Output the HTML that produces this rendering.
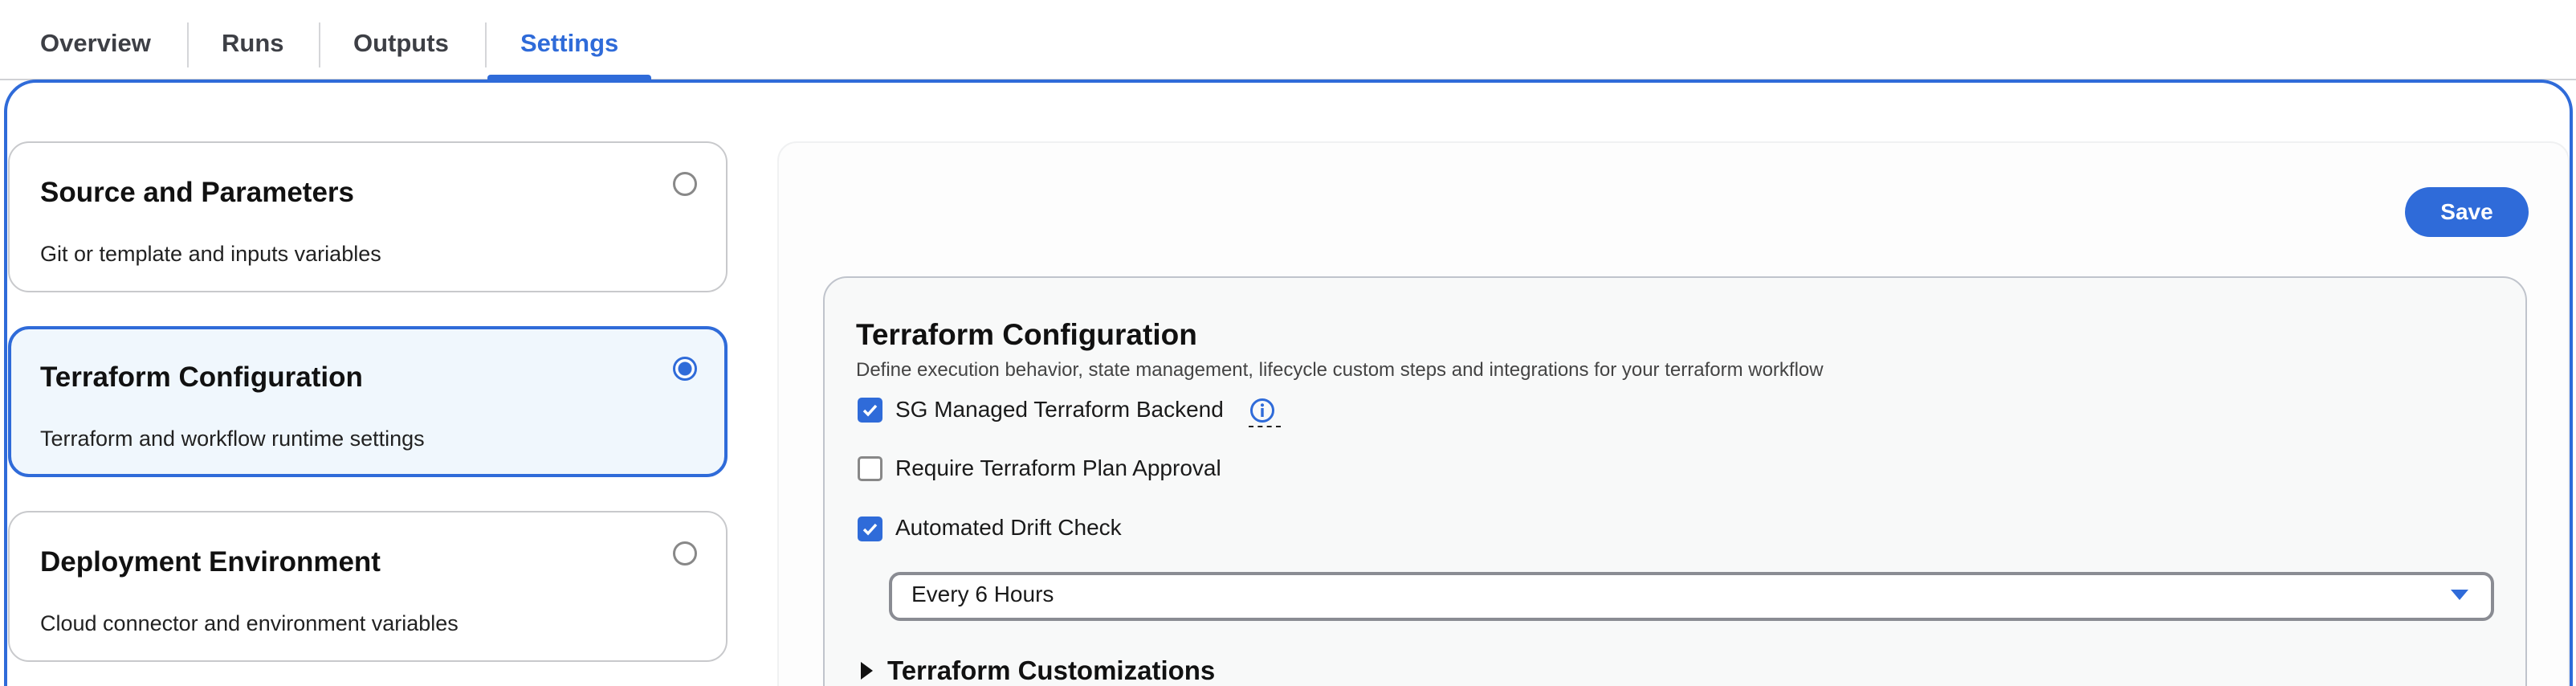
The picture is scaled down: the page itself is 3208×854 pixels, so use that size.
<!DOCTYPE html>
<html><head><meta charset="utf-8"><style>
*{box-sizing:border-box;margin:0;padding:0}
html,body{width:3208px;height:854px;overflow:hidden}
body{background:#fff;font-family:"Liberation Sans",sans-serif;color:#111}
#w{position:relative;width:3208px;height:854px;overflow:hidden}
.a{position:absolute}
.tab{position:absolute;top:36px;font-size:31px;font-weight:bold;color:#3d3f45}
.div{position:absolute;top:28px;width:2px;height:56px;background:#d5d6d9}
.card{position:absolute;left:10px;width:896px;height:188px;border:2px solid #c8c9cc;border-radius:26px;background:#fff}
.card .t{position:absolute;left:38px;top:42px;font-size:35px;font-weight:bold;color:#111}
.card .s{position:absolute;left:38px;top:123px;font-size:27px;color:#222}
.card .r{position:absolute;left:826px;top:36px;width:30px;height:30px;border:3px solid #888;border-radius:50%}
.cb{position:absolute;left:1068px;width:31px;height:31px;border-radius:5px;background:#2f6bd9}
.cb svg{position:absolute;left:5px;top:5px}
.lbl{position:absolute;left:1115px;font-size:28px;color:#1a1a1a}
</style></head><body><div id="w">
<div class="tab" style="left:50px">Overview</div>
<div class="div" style="left:233px"></div>
<div class="tab" style="left:276px">Runs</div>
<div class="div" style="left:397px"></div>
<div class="tab" style="left:440px">Outputs</div>
<div class="div" style="left:604px"></div>
<div class="tab" style="left:648px;color:#2f6bd9">Settings</div>
<div class="a" style="left:0;top:98px;width:3208px;height:2px;background:#d0d1d4"></div>
<div class="a" style="left:607px;top:93px;width:204px;height:8px;background:#2f6bd9;border-radius:4px 4px 0 0"></div>

<div class="card" style="top:176px"><div class="t">Source and Parameters</div><div class="s">Git or template and inputs variables</div><div class="r"></div></div>
<div class="card" style="top:406px;border:4px solid #2f6bd9;background:#f0f7fd"><div class="t" style="left:36px;top:40px">Terraform Configuration</div><div class="s" style="left:36px;top:121px">Terraform and workflow runtime settings</div><div class="r" style="left:824px;top:34px;border-color:#2f6bd9;border-width:3px;background:radial-gradient(circle,#2f6bd9 0 8px,#fff 9px)"></div></div>
<div class="card" style="top:636px"><div class="t">Deployment Environment</div><div class="s">Cloud connector and environment variables</div><div class="r"></div></div>

<div class="a" style="left:968px;top:176px;width:2232px;height:900px;border:2px solid #f0f1f2;border-radius:24px;background:#fdfdfd"></div>
<div class="a" style="left:5px;top:99px;width:3199px;height:900px;border:4px solid #2f6bd9;border-radius:40px"></div>
<div class="a" style="left:2995px;top:233px;width:154px;height:62px;border-radius:31px;background:#2f6bd9;color:#fff;font-weight:bold;font-size:28px;text-align:center;line-height:62px">Save</div>

<div class="a" style="left:1025px;top:344px;width:2122px;height:700px;border:2px solid #c0c4cc;border-radius:30px;background:#f8f9f9"></div>
<div class="a" style="left:1066px;top:396px;font-size:37px;font-weight:bold">Terraform Configuration</div>
<div class="a" style="left:1066px;top:447px;font-size:24px;color:#444">Define execution behavior, state management, lifecycle custom steps and integrations for your terraform workflow</div>

<div class="cb" style="top:495px"><svg width="21" height="21" viewBox="0 0 21 21"><path d="M3 11l5 5 10-11" stroke="#fff" stroke-width="3.5" fill="none"/></svg></div>
<div class="lbl" style="top:494px">SG Managed Terraform Backend</div>
<svg class="a" style="left:1556px;top:495px" width="32" height="32" viewBox="0 0 32 32"><circle cx="16" cy="16" r="13.5" stroke="#2f6bd9" stroke-width="3" fill="none"/><rect x="14.3" y="13" width="3.4" height="11" fill="#2f6bd9"/><circle cx="16" cy="9.3" r="2.1" fill="#2f6bd9"/></svg>
<div class="a" style="left:1555px;top:530px;width:40px;border-top:2px dashed #222"></div>

<div class="cb" style="top:568px;background:#fff;border:3px solid #888"></div>
<div class="lbl" style="top:567px">Require Terraform Plan Approval</div>
<div class="cb" style="top:643px"><svg width="21" height="21" viewBox="0 0 21 21"><path d="M3 11l5 5 10-11" stroke="#fff" stroke-width="3.5" fill="none"/></svg></div>
<div class="lbl" style="top:641px">Automated Drift Check</div>

<div class="a" style="left:1107px;top:712px;width:1999px;height:61px;border:4px solid #8a8c93;border-radius:14px;background:#fff"></div>
<div class="a" style="left:1135px;top:724px;font-size:28px;color:#1a1a1a">Every 6 Hours</div>
<svg class="a" style="left:3051px;top:733px" width="24" height="16" viewBox="0 0 24 16"><path d="M1 1h22L12 14z" fill="#2f6bd9"/></svg>

<svg class="a" style="left:1071px;top:823px" width="18" height="24" viewBox="0 0 18 24"><path d="M1 1l15 11L1 23z" fill="#111"/></svg>
<div class="a" style="left:1105px;top:816px;font-size:33px;font-weight:bold">Terraform Customizations</div>
</div></body></html>
